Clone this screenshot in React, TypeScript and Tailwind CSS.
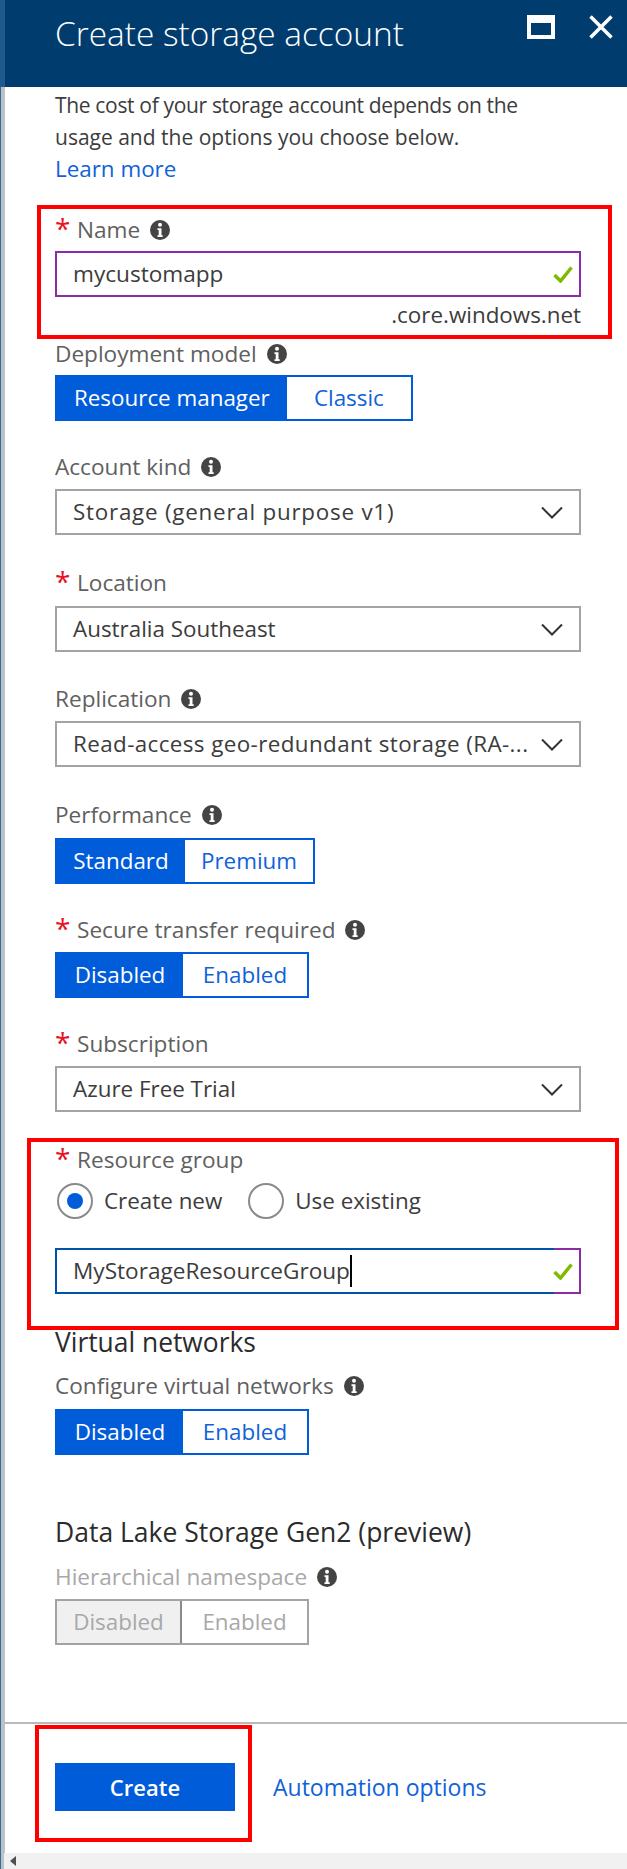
import { ReactNode } from 'react'

const font = "font-['Open_Sans',sans-serif]"

function Info() {
  return (
    <svg width="20" height="20" viewBox="0 0 20 20" className="ml-[10px] shrink-0">
      <circle cx="10" cy="10" r="10" fill="#444" />
      <circle cx="10" cy="4.8" r="2" fill="#fff" />
      <path d="M7.5 8.2h4v7h1.2v1.8H7.5v-1.8h1.2v-5.2H7.5z" fill="#fff" />
    </svg>
  )
}

function Label({ text, star, info, muted, className }: { text: string; star?: boolean; info?: boolean; muted?: boolean; className: string }) {
  return (
    <div className={`flex items-center h-[32px] text-[22.6px] ${muted ? 'text-[#a8a8a8]' : 'text-[#606060]'} ${className}`}>
      {star && <span className="w-[22px] text-[28px] leading-[28px] text-[#e81123] -mt-[4px] h-[28px]">*</span>}
      <span>{text}</span>
      {info && <Info />}
    </div>
  )
}

function Check() {
  return (
    <svg width="20" height="17" viewBox="0 0 20 17" className="shrink-0">
      <path d="M1.5 9l6 6L18.5 1.5" fill="none" stroke="#7fba00" strokeWidth="3.5" />
    </svg>
  )
}

function Select({ value, className, textClass }: { value: string; className: string; textClass?: string }) {
  return (
    <div className={`flex items-center justify-between w-[526px] h-[46px] border-2 border-[#a3a3a3] pl-[16px] pr-[16px] text-[22.4px] text-[#3c3c3c] ${className}`}>
      <span className={`whitespace-nowrap ${textClass ?? ''}`}>{value}</span>
      <svg width="22" height="13" viewBox="0 0 22 13" className="shrink-0">
        <path d="M1 1.5l10 10 10-10" fill="none" stroke="#333" strokeWidth="2" />
      </svg>
    </div>
  )
}

function Toggle({ left, right, className, leftW, rightW }: { left: string; right: string; className: string; leftW: string; rightW: string }) {
  return (
    <div className={`flex h-[46px] border-2 border-[#015cda] text-[22.4px] ${className}`}>
      <div className={`flex items-center justify-center bg-[#015cda] text-white ${leftW}`}>{left}</div>
      <div className={`flex items-center justify-center text-[#0f62d9] ${rightW}`}>{right}</div>
    </div>
  )
}

function Radio({ on, children }: { on?: boolean; children: ReactNode }) {
  return (
    <div className="flex items-center">
      <div className="flex items-center justify-center w-[36px] h-[36px] rounded-full border-2 border-[#8a8a8a]">
        {on && <div className="w-[16px] h-[16px] rounded-full bg-[#015cda]" />}
      </div>
      <span className="ml-[11px] text-[22.4px] text-[#3c3c3c]">{children}</span>
    </div>
  )
}

export default function App() {
  return (
    <div className={`relative w-[627px] h-[1869px] overflow-hidden bg-white ${font}`}>
      {/* Header */}
      <div className="flex items-start justify-between h-[87px] bg-[#003c6e] border-l-[5px] border-[#1f5a8f] pl-[50px] pr-[14px]">
        <h1 className="mt-[8px] text-[33.4px] leading-[50px] font-light text-white">Create storage account</h1>
        <div className="flex items-start mt-[15px]">
          <div className="w-[28px] h-[24px] border-4 border-t-8 border-white" />
          <svg width="24" height="24" viewBox="0 0 24 24" className="ml-[34px]">
            <path d="M1.5 1.5l21 21M22.5 1.5l-21 21" stroke="#fff" strokeWidth="3.5" fill="none" />
          </svg>
        </div>
      </div>

      <div className="border-l border-[#2a6ea8]">
        <div className="border-l-4 border-[#c0c0c0]">
          {/* Blade body */}
          <div className="pl-[50px] pt-[2px]">
            <p className="w-[560px] text-[21px] leading-[32px] text-[#3c3c3c]">
              <span className="tracking-[-0.33px]">The cost of your storage account depends on the</span>
              <br />
              usage and the options you choose below.
              <br />
              <span className="text-[22.4px] text-[#0f62d9]">Learn more</span>
            </p>

            <Label text="Name" star info className="mt-[29px]" />
            <div className="flex items-center justify-between w-[526px] h-[46px] mt-[5px] border-2 border-[#8a2da5] pl-[16px] pr-[6px] text-[22.6px] text-[#3c3c3c]">
              <span>mycustomapp</span>
              <Check />
            </div>
            <div className="w-[526px] h-[32px] mt-[2px] text-right text-[22.4px] leading-[32px] text-[#3c3c3c]">.core.windows.net</div>

            <Label text="Deployment model" info className="mt-[7px]" />
            <Toggle left="Resource manager" right="Classic" leftW="w-[231px]" rightW="w-[125px]" className="w-[358px] mt-[5px]" />

            <Label text="Account kind" info className="mt-[30px]" />
            <Select value="Storage (general purpose v1)" textClass="tracking-[0.76px]" className="mt-[6px]" />

            <Label text="Location" star className="mt-[32px]" />
            <Select value="Australia Southeast" className="mt-[7px]" />

            <Label text="Replication" info className="mt-[31px]" />
            <Select value="Read-access geo-redundant storage (RA-..." textClass="tracking-[0.4px]" className="mt-[6px]" />

            <Label text="Performance" info className="mt-[32px]" />
            <Toggle left="Standard" right="Premium" leftW="w-[129px]" rightW="w-[129px]" className="w-[260px] mt-[7px]" />

            <Label text="Secure transfer required" star info className="mt-[30px]" />
            <Toggle left="Disabled" right="Enabled" leftW="w-[127px]" rightW="w-[125px]" className="w-[254px] mt-[6px]" />

            <Label text="Subscription" star className="mt-[30px]" />
            <Select value="Azure Free Trial" className="mt-[6px]" />

            <Label text="Resource group" star className="mt-[32px]" />
            <div className="flex gap-[26px] mt-[7px] ml-[2px]">
              <Radio on>Create new</Radio>
              <Radio>Use existing</Radio>
            </div>
            <div className="relative flex items-center justify-between w-[526px] h-[46px] mt-[29px] border-2 border-[#0054a6] pl-[16px] pr-[6px] text-[22.6px] text-[#3c3c3c]">
              <span className="flex items-center">
                MyStorageResourceGroup
                <span className="w-[2px] h-[32px] bg-black" />
              </span>
              <Check />
              <div className="absolute -top-[2px] -right-[2px] -bottom-[2px] w-[27px] border-y-2 border-r-2 border-[#8a2da5]" />
            </div>

            <div className="h-[32px] mt-[32px] text-[26.4px] leading-[32px] text-[#2b2b2b]">Virtual networks</div>
            <Label text="Configure virtual networks" info className="mt-[12px]" />
            <Toggle left="Disabled" right="Enabled" leftW="w-[127px]" rightW="w-[125px]" className="w-[254px] mt-[7px]" />

            <div className="h-[32px] mt-[61px] text-[26.5px] leading-[32px] text-[#2b2b2b]">Data Lake Storage Gen2 (preview)</div>
            <Label text="Hierarchical namespace" info muted className="mt-[13px]" />
            <div className="flex w-[254px] h-[46px] mt-[6px] border-2 border-[#a3a3a3] text-[22.4px] text-[#a8a8a8]">
              <div className="flex items-center justify-center w-[126px] bg-[#f0f0f0] border-r-2 border-[#8a8a8a]">Disabled</div>
              <div className="flex items-center justify-center w-[126px]">Enabled</div>
            </div>
          </div>

          {/* Footer */}
          <div className="h-[2px] mt-[77px] bg-[#b9b9b9]" />
          <div className="flex items-center h-[48px] mt-[39px] ml-[50px]">
            <div className="flex items-center justify-center w-[180px] h-[48px] bg-[#015cda] text-[22px] font-semibold text-white">Create</div>
            <span className="ml-[38px] text-[23px] text-[#0f62d9]">Automation options</span>
          </div>
          <div className="flex items-center h-[16px] mt-[42px] -ml-px bg-[#f1f1f1] pl-[3px]">
            <svg width="6" height="10" viewBox="0 0 6 10" className="ml-[3px]"><path d="M6 0v10L0 5z" fill="#505050" /></svg>
          </div>
          <div className="h-[2px] bg-[#707a80]" />
        </div>
      </div>

      {/* Red callouts from the screenshot */}
      <div className="absolute left-[37px] top-[205px] w-[575px] h-[134px] border-4 border-[#ff0000]" />
      <div className="absolute left-[27px] top-[1138px] w-[592px] h-[192px] border-4 border-[#ff0000]" />
      <div className="absolute left-[35px] top-[1725px] w-[217px] h-[117px] border-4 border-[#ff0000]" />
    </div>
  )
}
